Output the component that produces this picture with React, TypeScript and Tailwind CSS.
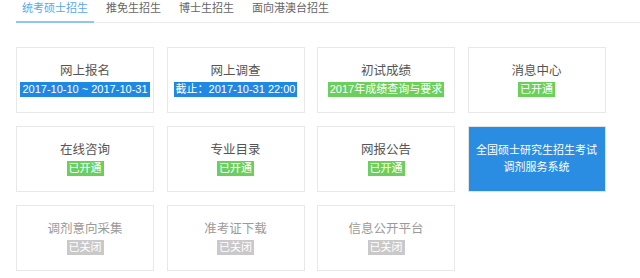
import React from "react";

type Item = { title: string; badge?: string; kind: "blue" | "green" | "gray" | "card" };

const items: Item[] = [
  { title: "网上报名", badge: "2017-10-10 ~ 2017-10-31", kind: "blue" },
  { title: "网上调查", badge: "截止：2017-10-31 22:00", kind: "blue" },
  { title: "初试成绩", badge: "2017年成绩查询与要求", kind: "green" },
  { title: "消息中心", badge: "已开通", kind: "green" },
  { title: "在线咨询", badge: "已开通", kind: "green" },
  { title: "专业目录", badge: "已开通", kind: "green" },
  { title: "网报公告", badge: "已开通", kind: "green" },
  { title: "", kind: "card" },
  { title: "调剂意向采集", badge: "已关闭", kind: "gray" },
  { title: "准考证下载", badge: "已关闭", kind: "gray" },
  { title: "信息公开平台", badge: "已关闭", kind: "gray" },
];

const badgeCls: Record<string, string> = {
  blue: "bg-[#1f88e3] text-white",
  green: "bg-[#6ccf5d] text-white",
  gray: "bg-[#c9c9c9] text-white",
};

export default function App() {
  const tabs = ["统考硕士招生", "推免生招生", "博士生招生", "面向港澳台招生"];
  return (
    <div
      className="w-[640px] h-[278px] bg-white overflow-hidden pl-[16px]"
      style={{ fontFamily: '"Liberation Sans", "Noto Sans CJK SC", sans-serif' }}
    >
      <div className="flex h-[23px] border-b border-[#ececec] w-[624px]">
        {tabs.map((t, i) => (
          <div
            key={t}
            className={
              "px-[6px] mr-[6px] text-[11px] leading-[15px] pt-[1px] " +
              (i === 0
                ? "text-[#5aa8ee] border-b-[2px] border-[#8ec5f3] -mb-[1px]"
                : "text-[#666]")
            }
          >
            {t}
          </div>
        ))}
      </div>
      <div className="grid grid-cols-[repeat(4,138px)] gap-x-[12.5px] gap-y-[13px] mt-[24px] auto-rows-[66px]">
        {items.map((it, i) =>
          it.kind === "card" ? (
            <div
              key={i}
              className="bg-[#2a8de2] border border-[#e3e3e3] flex flex-col items-center justify-center text-white text-[11px] leading-[17px]"
            >
              <div>全国硕士研究生招生考试</div>
              <div>调剂服务系统</div>
            </div>
          ) : (
            <div
              key={i}
              className="border border-[#e8e8e8] bg-white flex flex-col items-center justify-center"
            >
              <div
                className={
                  "text-[12.5px] leading-[16px] " +
                  (it.kind === "gray" ? "text-[#9a9a9a]" : "text-[#555]")
                }
              >
                {it.title}
              </div>
              <div
                className={
                  "mt-[3px] px-[2px] text-[11px] leading-[15px] h-[15px] whitespace-nowrap " +
                  badgeCls[it.kind]
                }
              >
                {it.badge}
              </div>
            </div>
          )
        )}
      </div>
    </div>
  );
}
